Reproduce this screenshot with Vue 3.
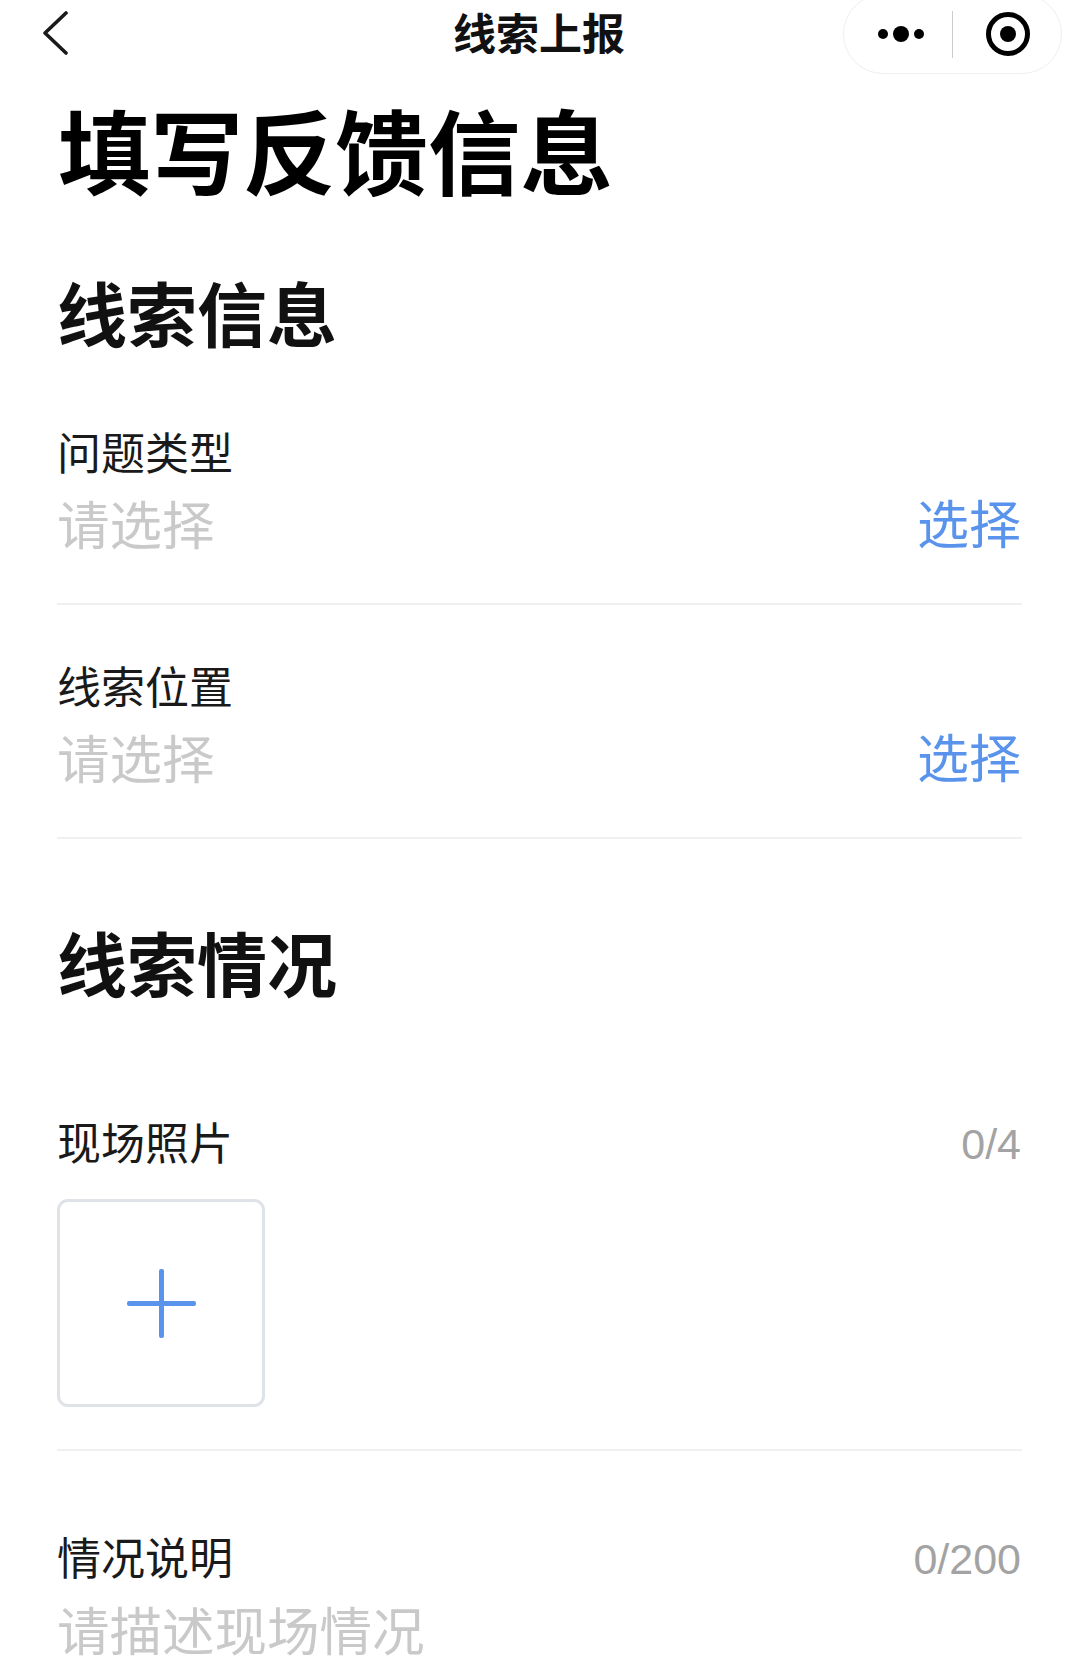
<script setup>
const fields = [
  { label: '问题类型', placeholder: '请选择' },
  { label: '线索位置', placeholder: '请选择' }
]
</script>

<template>
  <div class="page">
    <header class="nav">
      <svg class="back" width="28" height="44" viewBox="0 0 28 44">
        <path d="M25 2 L4 22 L25 42" fill="none" stroke="#1a1a1a" stroke-width="3.6" stroke-linecap="round" stroke-linejoin="round" />
      </svg>
      <div class="nav-title">线索上报</div>
      <div class="capsule">
        <span class="dots"><i class="dot"></i><i class="dot big"></i><i class="dot"></i></span>
        <span class="divider"></span>
        <span class="target"><i></i></span>
      </div>
    </header>

    <main class="content">
      <h1 class="title">填写反馈信息</h1>
      <h2 class="section first">线索信息</h2>
      <div v-for="f in fields" :key="f.label" class="field">
        <div class="label">{{ f.label }}</div>
        <div class="value-row">
          <span class="placeholder">{{ f.placeholder }}</span>
          <span class="action">选择</span>
        </div>
      </div>

      <h2 class="section second">线索情况</h2>
      <div class="photos">
        <div class="label-row">
          <span class="label">现场照片</span>
          <span class="count">0/4</span>
        </div>
        <div class="upload"><span class="plus"></span></div>
      </div>
      <div class="desc">
        <div class="label-row">
          <span class="label">情况说明</span>
          <span class="count">0/200</span>
        </div>
        <div class="placeholder desc-text">请描述现场情况</div>
      </div>
    </main>
  </div>
</template>

<style>
html, body { margin: 0; background: #fff; }
</style>

<style scoped>
.page {
  width: 1080px;
  height: 1663px;
  overflow: hidden;
  background: #fff;
  font-family: "Noto Sans CJK SC", "Liberation Sans", sans-serif;
  color: #111;
}
.nav {
  position: relative;
  height: 66px;
  display: flex;
  align-items: center;
  justify-content: center;
}
.back { position: absolute; left: 41px; top: 11px; }
.nav-title { font-size: 43px; font-weight: 700; line-height: 62px; height: 62px; margin: 0 2px 4px 0; color: #111; }
.capsule {
  position: absolute;
  left: 843px;
  top: -6px;
  width: 219px;
  height: 80px;
  box-sizing: border-box;
  border: 1px solid #efefef;
  border-radius: 40px;
  display: flex;
  align-items: center;
}
.dots { width: 108px; display: flex; justify-content: center; align-items: center; gap: 5px; padding-left: 6px; box-sizing: border-box; }
.dot { width: 10px; height: 10px; border-radius: 50%; background: #000; }
.dot.big { width: 16px; height: 16px; }
.divider { width: 1px; height: 47px; background: #ccc; }
.target {
  margin-left: 33px;
  width: 44px;
  height: 44px;
  box-sizing: border-box;
  border: 5px solid #000;
  border-radius: 50%;
  display: flex;
  align-items: center;
  justify-content: center;
}
.target i { width: 16px; height: 16px; border-radius: 50%; background: #000; }
.content { padding: 0 58px 0 57px; }
.title { margin: 32px 0 0 1px; font-size: 92.5px; line-height: 100px; font-weight: 700; color: #000; }
.section { margin: 0; font-size: 70px; line-height: 90px; font-weight: 700; color: #111; }
.section.first { margin-top: 69px; }
.section.second { margin-top: 78px; }
.field { border-bottom: 2px solid #f0f0f0; padding-bottom: 45px; }
.section.first + .field { margin-top: 64px; }
.field + .field { margin-top: 0; padding-top: 50px; }
.label { font-size: 44px; line-height: 60px; color: #1a1a1a; }
.value-row { display: flex; justify-content: space-between; align-items: center; height: 72px; margin-top: 5px; padding-right: 1px; }
.placeholder { font-size: 52.5px; line-height: 72px; color: #c9c9c9; }
.action { font-size: 52px; line-height: 74px; color: #5a93ec; }
.label-row { display: flex; justify-content: space-between; align-items: center; height: 60px; }
.count { font-size: 43px; color: #a3a3a3; font-family: "Liberation Sans", sans-serif; padding: 6px 1px 0 0; }
.photos { margin-top: 104px; padding-bottom: 42px; border-bottom: 2px solid #f0f0f0; }
.upload {
  margin-top: 28px;
  width: 208px;
  height: 208px;
  box-sizing: border-box;
  border: 3px solid #dfe2e6;
  border-radius: 11px;
  position: relative;
}
.plus { position: absolute; left: 67px; top: 67px; width: 69px; height: 69px; }
.plus::before, .plus::after { content: ""; position: absolute; background: #5a93ec; border-radius: 2px; }
.plus::before { left: 0; right: 0; top: 32px; height: 5px; }
.plus::after { top: 0; bottom: 0; left: 32px; width: 5px; }
.desc { margin-top: 75px; }
.desc-text { margin-top: 6px; }
</style>
